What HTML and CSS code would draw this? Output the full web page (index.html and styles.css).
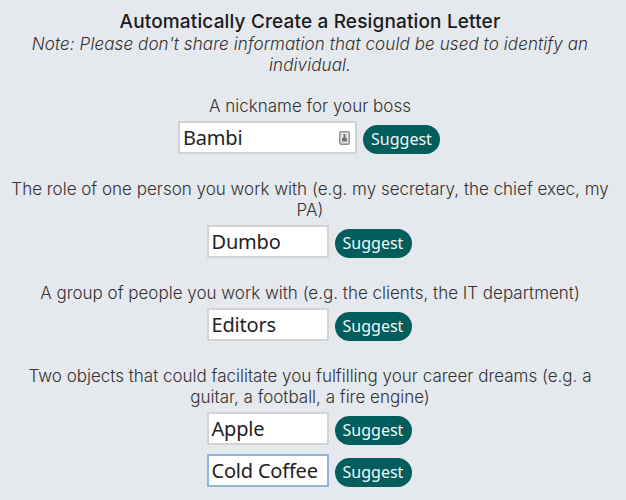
FILE: index.html
```html
<!DOCTYPE html>
<html lang="en">
<head>
    <meta charset="UTF-8">
    <title>Automatically Create a Resignation Letter</title>
    <link rel="stylesheet" href="styles.css">
</head>
<body>
    <main class="container">
        <h1>Automatically Create a Resignation Letter</h1>
        <p class="note">Note: Please don't share information that could be used to identify an individual.</p>

        <div class="field first">
            <label>A nickname for your boss</label>
            <div class="row">
                <div class="input wide">
                    <span>Bambi</span>
                    <svg class="key" width="11" height="14" viewBox="0 0 11 14">
                        <rect x="0.75" y="0.75" width="9.5" height="12.5" rx="1.5" fill="#e3e5e3" stroke="#8f9391" stroke-width="1.5"/>
                        <rect x="4.5" y="3" width="2" height="4" fill="#6f7371"/>
                        <rect x="3" y="7" width="5" height="3.5" fill="#6f7371"/>
                    </svg>
                </div>
                <button>Suggest</button>
            </div>
        </div>

        <div class="field">
            <label>The role of one person you work with (e.g. my secretary, the chief exec, my PA)</label>
            <div class="row">
                <div class="input"><span>Dumbo</span></div>
                <button>Suggest</button>
            </div>
        </div>

        <div class="field">
            <label>A group of people you work with (e.g. the clients, the IT department)</label>
            <div class="row">
                <div class="input"><span>Editors</span></div>
                <button>Suggest</button>
            </div>
        </div>

        <div class="field">
            <label>Two objects that could facilitate you fulfilling your career dreams (e.g. a guitar, a football, a fire engine)</label>
            <div class="row">
                <div class="input"><span>Apple</span></div>
                <button>Suggest</button>
            </div>
            <div class="row">
                <div class="input focus"><span>Cold Coffee</span></div>
                <button>Suggest</button>
            </div>
        </div>
    </main>
</body>
</html>
```

FILE: styles.css
```css
body {
    margin: 0;
    background-color: #e5e8ed;
    font-family: Inter, sans-serif;
    font-weight: 300;
    color: #333;
    height: 500px;
    overflow: hidden;
}

.container {
    width: 620px;
    padding-top: 9px;
    text-align: center;
}

h1 {
    margin: 0;
    font-size: 19px;
    line-height: 25px;
    letter-spacing: 0.15px;
    font-weight: 500;
    color: #1c1c1c;
}

.note {
    margin: 0 auto;
    width: 590px;
    font-size: 17px;
    line-height: 21px;
    letter-spacing: 0.1px;
    font-style: italic;
}

.field {
    margin-top: 25px;
}

.field.first {
    margin-top: 20px;
}

label {
    display: block;
    width: 604px;
    margin: 0 auto 4px;
    font-size: 17px;
    line-height: 21px;
}

.row {
    display: flex;
    justify-content: center;
    align-items: center;
    gap: 6px;
    padding-right: 2px;
    margin-bottom: 9px;
}

.input {
    box-sizing: border-box;
    width: 122px;
    height: 33px;
    display: flex;
    align-items: center;
    justify-content: space-between;
    padding: 0 5px 0 3px;
    background: #fff;
    border: 2px solid #d2d4d4;
    font-family: "Noto Sans", sans-serif;
    font-weight: 400;
    font-size: 20px;
    letter-spacing: -0.2px;
    color: #222;
    white-space: nowrap;
}

.input.wide {
    width: 179px;
}

.input.focus {
    border-color: #8db6dc;
}

.key {
    flex: none;
}

button {
    width: 77px;
    height: 29px;
    margin-top: 3px;
    padding: 0;
    border: none;
    border-radius: 15px;
    background-color: #025e5c;
    color: #f2f6f6;
    font-family: "Noto Sans", sans-serif;
    font-size: 16px;
}
```
